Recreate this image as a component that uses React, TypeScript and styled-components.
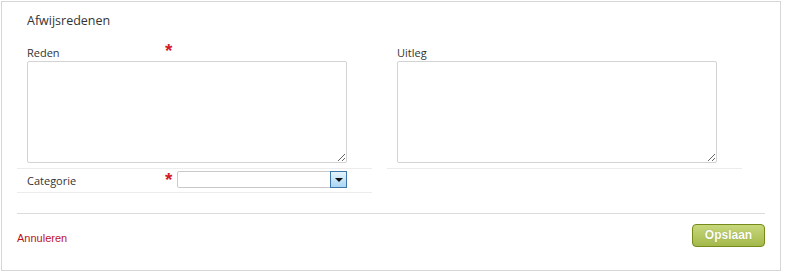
import styled, { createGlobalStyle } from "styled-components";

const GlobalStyle = createGlobalStyle`
    html, body {
        margin: 0;
        padding: 0;
        background: #ffffff;
    }
    body {
        font-family: "Open Sans", "Liberation Sans", sans-serif;
        color: #333333;
    }
`;

export const Panel = styled.div`
    width: 748px;
    height: 268px;
    margin: 1px 0 0 1px;
    padding: 0 15px;
    border: 1px solid #d6d6d6;
    box-sizing: content-box;
    display: flex;
    flex-direction: column;
`;

export const Title = styled.h3`
    margin: 11px 0 0 10px;
    height: 16px;
    font-size: 12.5px;
    line-height: 16px;
    font-weight: 400;
    color: #333333;
`;

export const Columns = styled.div`
    display: grid;
    grid-template-columns: 355px 355px;
    column-gap: 15px;
    margin-top: 16px;
`;

export const Column = styled.div`
    display: flex;
    flex-direction: column;
`;

export const Field = styled.div`
    padding: 0 10px 5px;
    border-bottom: 1px solid #ececec;
`;

export const LabelRow = styled.div`
    display: flex;
    align-items: flex-start;
    height: 16px;
`;

export const Label = styled.label<{ $offset?: number }>`
    width: 138px;
    font-size: 11px;
    line-height: 14px;
    padding-top: ${({ $offset }) => $offset ?? 1}px;
    color: #333333;
`;

export const Required = styled.span`
    width: 12px;
    color: #d0202a;
    font-family: "Liberation Sans", sans-serif;
    font-size: 19px;
    font-weight: 700;
    line-height: 14px;
    margin-top: -1px;
`;

export const TextArea = styled.textarea`
    display: block;
    box-sizing: border-box;
    width: 320px;
    height: 102px;
    margin: 0;
    border: 1px solid #d3d3d3;
    border-radius: 2px;
    font-family: inherit;
    outline: none;
`;

export const SelectRow = styled.div`
    display: flex;
    align-items: center;
    height: 23px;
    padding: 0 10px;
    border-bottom: 1px solid #ececec;
`;

export const SelectBox = styled.div`
    display: flex;
    justify-content: flex-end;
    box-sizing: border-box;
    width: 170px;
    height: 17px;
    margin-top: -3px;
    border: 1px solid #c9c9c9;
    border-radius: 2px;
    background: #ffffff;
`;

export const ArrowButton = styled.div`
    box-sizing: border-box;
    width: 17px;
    height: 17px;
    margin: -1px -1px 0 0;
    border: 1px solid #3e76a8;
    background: linear-gradient(#e6f4fd, #a9d6f3);
    display: flex;
    align-items: center;
    justify-content: center;

    &::after {
        content: "";
        margin-top: 2px;
        border-left: 4px solid transparent;
        border-right: 4px solid transparent;
        border-top: 4px solid #111111;
    }
`;

export const Footer = styled.div`
    display: flex;
    justify-content: space-between;
    align-items: center;
    margin-top: 20px;
    padding-top: 10px;
    border-top: 1px solid #dcdcdc;
`;

export const CancelLink = styled.a`
    margin-top: 4px;
    font-family: "Liberation Sans", sans-serif;
    font-size: 11px;
    color: #c0131c;
    text-decoration: none;
    cursor: pointer;
`;

export const SaveButton = styled.button`
    box-sizing: border-box;
    width: 73px;
    height: 23px;
    border: 1px solid #758a18;
    border-radius: 4px;
    background: linear-gradient(#c7d87c, #a3b84a);
    color: #ffffff;
    font-family: "Liberation Sans", sans-serif;
    font-size: 12px;
    font-weight: 700;
    text-shadow: 0 0 1px rgba(80, 90, 20, 0.4);
    padding: 0 0 1px;
    cursor: pointer;
`;

export default function App() {
    return (
        <>
            <GlobalStyle />
            <Panel>
                <Title>Afwijsredenen</Title>
                <Columns>
                    <Column>
                        <Field>
                            <LabelRow>
                                <Label>Reden</Label>
                                <Required>*</Required>
                            </LabelRow>
                            <TextArea />
                        </Field>
                        <SelectRow>
                            <Label $offset={0}>Categorie</Label>
                            <Required>*</Required>
                            <SelectBox>
                                <ArrowButton />
                            </SelectBox>
                        </SelectRow>
                    </Column>
                    <Column>
                        <Field>
                            <LabelRow>
                                <Label>Uitleg</Label>
                            </LabelRow>
                            <TextArea />
                        </Field>
                    </Column>
                </Columns>
                <Footer>
                    <CancelLink>Annuleren</CancelLink>
                    <SaveButton>Opslaan</SaveButton>
                </Footer>
            </Panel>
        </>
    );
}
